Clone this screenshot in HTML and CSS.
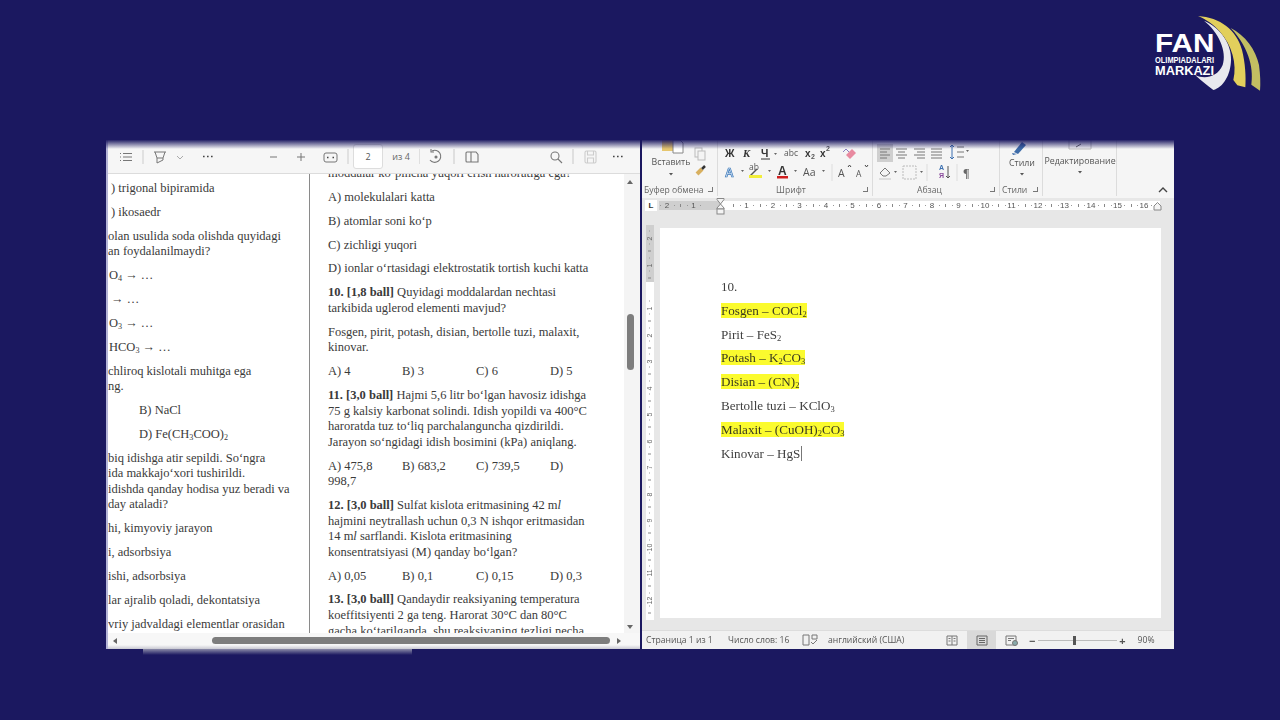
FILE: index.html
```html
<!DOCTYPE html>
<html>
<head>
  <meta charset="UTF-8">
  <title>Fan olimpiadalari markazi</title>
  <link rel="stylesheet" href="styles.css">
</head>
<body>
  <svg class="logo" viewBox="0 0 450 330">
    <path fill="#e9e9ee" d="M222 62 C275 85 305 135 303 180 C302 225 280 262 250 270 C232 258 212 240 196 226 C225 238 262 232 278 195 C292 155 265 95 222 62Z"/>
    <path fill="#e2cf5c" d="M204 48 C270 52 320 90 336 150 C346 190 348 230 346 262 L322 256 L310 240 C322 190 305 135 270 95 C250 72 228 58 204 48Z"/>
    <path fill="#c2be62" d="M302 84 C345 105 378 150 387 195 C391 225 392 250 390 272 L364 254 C370 215 364 150 302 84Z"/>
    <text class="logo-fan" x="75" y="157" textLength="178" lengthAdjust="spacingAndGlyphs">FAN</text>
    <text class="logo-small" x="75" y="190" textLength="177" lengthAdjust="spacingAndGlyphs">OLIMPIADALARI</text>
    <text class="logo-mid" x="75" y="224" textLength="177" lengthAdjust="spacingAndGlyphs">MARKAZI</text>
  </svg>

  <div class="screen">
    <!-- pdf viewer -->
    <div class="pdf">
      <div class="pdf-toolbar">
        <svg class="tb-left" width="247" height="34" fill="none" stroke="#777" stroke-width="1">
          <path d="M14 13.500h1M14 17h1M14 20.500h1M17 13.500h9M17 17h9M17 20.500h9"/>
          <path d="M37 10v14" stroke="#ccc"/>
          <path d="M48 12h12M49 12l2 6h6l2-6M51 18v5l6-3v-2"/>
          <path d="M71 16l3 3 3-3" stroke="#aaa"/>
          <path d="M97 16.500h1.600M101 16.500h1.600M105 16.500h1.600" stroke="#444" stroke-width="1.6"/>
          <path d="M164 17h7M191 17h8M195 13v8"/>
          <rect x="218" y="13" width="13" height="9" rx="2"/>
          <path d="M221 17.500h1.500M226.500 17.500h1.500" stroke="#444" stroke-width="1.5"/>
          <path d="M242 9v15" stroke="#ccc"/>
        </svg>
        <div class="page-box">2</div>
        <div class="page-label">из 4</div>
        <svg class="tb-right" width="221" height="34" fill="none" stroke="#777" stroke-width="1.1">
          <path d="M0 9v15M35 9v15" stroke="#ccc"/>
          <path d="M13 11a6 6 0 1 1-2 9"/>
          <path d="M12 9v3h3" stroke="#777"/>
          <circle cx="17" cy="17" r="1" fill="#666"/>
          <path d="M48 12h4v10h-4a1 1 0 0 1-1-1v-8a1 1 0 0 1 1-1zM52 12h5l2 2.500V22h-7"/>
          <circle cx="136" cy="16" r="4"/><path d="M139 19l4 4"/>
          <path d="M154 9v15" stroke="#ccc"/>
          <rect x="166" y="11" width="11" height="12" rx="1.500" stroke="#ccc"/>
          <path d="M168.500 11v4h6v-4M168.500 23v-5h6v5" stroke="#ccc"/>
          <path d="M194 16.500h1.600M198 16.500h1.600M202 16.500h1.600" stroke="#444" stroke-width="1.6"/>
        </svg>
      </div>

      <div class="pdf-view">
        <div class="pdf-pages">
          <div class="col col-left">
            <p class="in1">) trigonal bipiramida</p>
            <p class="in1">) ikosaedr</p>
            <p>olan usulida soda olishda quyidagi<br>an foydalanilmaydi?</p>
            <p class="in0">O<sub>4</sub> → …</p>
            <p class="in1">→ …</p>
            <p class="in0">O<sub>3</sub> → …</p>
            <p class="in0">HCO<sub>3</sub> → …</p>
            <p>chliroq kislotali muhitga ega<br>ng.</p>
            <p class="in2">B) NaCl</p>
            <p class="in2">D) Fe(CH<sub>3</sub>COO)<sub>2</sub></p>
            <p>biq idishga atir sepildi. So‘ngra<br>ida makkajo‘xori tushirildi.<br>idishda qanday hodisa yuz beradi va<br>day ataladi?</p>
            <p>hi, kimyoviy jarayon</p>
            <p>i, adsorbsiya</p>
            <p>ishi, adsorbsiya</p>
            <p>lar ajralib qoladi, dekontatsiya</p>
            <p>vriy jadvaldagi elementlar orasidan</p>
          </div>
          <div class="col col-right">
            <p>moddalar ko‘pincha yuqori erish haroratiga ega?</p>
            <p>A) molekulalari katta</p>
            <p>B) atomlar soni ko‘p</p>
            <p>C) zichligi yuqori</p>
            <p>D) ionlar o‘rtasidagi elektrostatik tortish kuchi katta</p>
            <p><b>10. [1,8 ball]</b> Quyidagi moddalardan nechtasi<br>tarkibida uglerod elementi mavjud?</p>
            <p>Fosgen, pirit, potash, disian, bertolle tuzi, malaxit,<br>kinovar.</p>
            <p class="answers"><span>A) 4</span><span>B) 3</span><span>C) 6</span><span>D) 5</span></p>
            <p><b>11. [3,0 ball]</b> Hajmi 5,6 litr bo‘lgan havosiz idishga<br>75 g kalsiy karbonat solindi. Idish yopildi va 400°C<br>haroratda tuz to‘liq parchalanguncha qizdirildi.<br>Jarayon so‘ngidagi idish bosimini (kPa) aniqlang.</p>
            <p><span class="answers"><span>A) 475,8</span><span>B) 683,2</span><span>C) 739,5</span><span>D)</span></span>998,7</p>
            <p><b>12. [3,0 ball]</b> Sulfat kislota eritmasining 42 m<i>l</i><br>hajmini neytrallash uchun 0,3 N ishqor eritmasidan<br>14 m<i>l</i> sarflandi. Kislota eritmasining<br>konsentratsiyasi (M) qanday bo‘lgan?</p>
            <p class="answers"><span>A) 0,05</span><span>B) 0,1</span><span>C) 0,15</span><span>D) 0,3</span></p>
            <p><b>13. [3,0 ball]</b> Qandaydir reaksiyaning temperatura<br>koeffitsiyenti 2 ga teng. Harorat 30°C dan 80°C<br>gacha ko‘tarilganda, shu reaksiyaning tezligi necha</p>
          </div>
        </div>
        <div class="vscroll">
          <span class="arrow-up"></span>
          <span class="vthumb"></span>
          <span class="arrow-down"></span>
        </div>
      </div>
      <div class="hscroll">
        <span class="arrow-left"></span>
        <span class="hthumb"></span>
        <span class="arrow-right"></span>
      </div>
    </div>

    <!-- word window -->
    <div class="word">
      <div class="ribbon">
        <div class="rgroup r-clip">
          <svg class="ricons" width="76" height="42" fill="none" stroke="#888">
            <rect x="20" y="-2" width="11" height="13" fill="#e6c66e" stroke="none"/>
            <path d="M31 0h7l3 3v10H31z" fill="#fff"/>
            <text class="rtxt" x="29" y="25" text-anchor="middle">Вставить</text>
            <path d="M27 33h4l-2 2.500z" fill="#555" stroke="none"/>
            <rect x="53" y="8" width="7" height="9" fill="#f4f4f4" stroke="#bbb"/>
            <rect x="56" y="11" width="7" height="9" fill="#f4f4f4" stroke="#bbb"/>
            <path d="M55 34l5-5" stroke="#d8b060" stroke-width="4"/>
            <path d="M60 29l3-3" stroke="#333" stroke-width="2.500"/>
          </svg>
          <div class="rlabel">Буфер обмена <i class="launch"></i></div>
        </div>
        <div class="rgroup r-font">
          <svg class="ricons" width="155" height="42" fill="none">
            <text class="rbold" x="7" y="17">Ж</text>
            <text class="rbold it" x="25" y="17">К</text>
            <text class="rbold" x="43" y="17">Ч</text>
            <path d="M43 19h9" stroke="#333"/>
            <path d="M56 13h3l-1.500 2z" fill="#666"/>
            <text class="rthin" x="66" y="16">abc</text>
            <text class="rbold sm" x="87" y="17">x</text><text class="rtiny" x="93" y="19">2</text>
            <text class="rbold sm" x="102" y="17">x</text><text class="rtiny" x="108" y="11">2</text>
            <path d="M128 15l6-6 4 4-6 6z" fill="#e88aa0"/>
            <path d="M125 12l3-3 3 3" stroke="#8a7ec0"/>
            <text class="ra blue" x="7" y="37">A</text>
            <path d="M23 30h3l-1.500 2z" fill="#666"/>
            <text class="rthin" x="31" y="30">ab</text>
            <path d="M32 36l7-7" stroke="#555" stroke-width="1.500"/>
            <rect x="31" y="35" width="13" height="3" fill="#f2ee3a"/>
            <path d="M50 30h3l-1.500 2z" fill="#666"/>
            <text class="ra" x="60" y="35" fill="#333">A</text>
            <rect x="59" y="36" width="11" height="2.500" fill="#d02020"/>
            <path d="M76 30h3l-1.500 2z" fill="#666"/>
            <text class="rthin big" x="85" y="36">Aa</text>
            <path d="M104 30h3l-1.500 2z" fill="#666"/>
            <path d="M114 24v17" stroke="#ddd"/>
            <text class="rthin big" x="120" y="37">A</text><path d="M130 27l1.500-2 1.500 2" stroke="#444"/>
            <text class="rthin" x="138" y="37">A</text><path d="M147 25l1.500 2 1.500-2" stroke="#444"/>
          </svg>
          <div class="rlabel label-mid">Шрифт <i class="launch"></i></div>
        </div>
        <div class="rgroup r-para">
          <svg class="ricons" width="127" height="42" fill="none" stroke="#777">
            <rect x="4" y="4" width="16" height="18" fill="#cfcfcf" stroke="none"/>
            <path d="M7 9h10M7 12h7M7 15h10M7 18h7"/>
            <path d="M23 9h11M25 12h7M23 15h11M25 18h7M41 9h11M44 12h8M41 15h11M44 18h8M58 9h11M58 12h11M58 15h11M58 18h11"/>
            <path d="M79 5v14M77 7l2-2 2 2M77 17l2 2 2-2" stroke="#3b6fb0"/>
            <path d="M84 7h7M84 12h7M84 17h7"/>
            <path d="M93 10h3l-1.500 2z" fill="#666" stroke="none"/>
            <path d="M7 33l5-5 5 5-4 3H10z" fill="#f4f4f4"/>
            <rect x="6" y="38" width="12" height="2" fill="#ddd" stroke="none"/>
            <path d="M21 31h3l-1.500 2z" fill="#666" stroke="none"/>
            <rect x="30" y="26" width="13" height="13" stroke="#bbb" stroke-dasharray="2 1"/>
            <path d="M47 31h3l-1.500 2z" fill="#666" stroke="none"/>
            <path d="M54 24v17" stroke="#ddd"/>
            <text class="rtiny blue" x="66" y="30">А</text>
            <text class="rtiny purple" x="66" y="38">Я</text>
            <path d="M75 26v12M73 36l2 2 2-2" stroke="#555"/>
            <path d="M84 24v17" stroke="#ddd"/>
            <text class="rpil" x="90" y="37">¶</text>
          </svg>
          <div class="rlabel label-para">Абзац <i class="launch"></i></div>
        </div>
        <div class="rgroup r-styles">
          <svg class="ricons" width="43" height="42" fill="none">
            <path d="M14 12l8-10 4 3-8 9z" fill="#3d6ba8"/>
            <path d="M12 13l5 1-4 1z" fill="#3d6ba8"/>
            <text class="rtxt" x="22" y="26" text-anchor="middle">Стили</text>
            <path d="M20 33h4l-2 2.500z" fill="#555"/>
          </svg>
          <div class="rlabel">Стили <i class="launch"></i></div>
        </div>
        <div class="rgroup r-edit">
          <svg class="ricons" width="74" height="42" fill="none">
            <path d="M26 0v9h22V0" stroke="#bbb"/>
            <path d="M33 7l5-3" stroke="#666"/>
            <text class="rtxt" x="37" y="24" text-anchor="middle">Редактирование</text>
            <path d="M35 31h4l-2 2.500z" fill="#555"/>
          </svg>
        </div>
        <svg class="collapse" width="10" height="6" fill="none" stroke="#444" stroke-width="1.4"><path d="M1 5l4-4 4 4"/></svg>
      </div>

      <div class="ruler-row">
        <div class="ruler-corner">L</div>
        <div class="ruler">
          <div class="ruler-margin">
            <span class="rc">2</span><span class="rc">1</span>
          </div>
          <div class="ruler-main">
            <span class="rc">1</span><span class="rc">2</span><span class="rc">3</span><span class="rc">4</span><span class="rc">5</span><span class="rc">6</span><span class="rc">7</span><span class="rc">8</span><span class="rc">9</span><span class="rc">10</span><span class="rc">11</span><span class="rc">12</span><span class="rc">13</span><span class="rc">14</span><span class="rc">15</span><span class="rc">16</span>
          </div>
          <svg class="indent" width="10" height="17" fill="#f4f4f4" stroke="#888"><path d="M1 .5h7v1L4.500 6 1 1.500zM4.500 6L8 10v1H1v-1z"/><rect x="1" y="11" width="7" height="5"/></svg>
          <svg class="indent-right" width="10" height="14" fill="#f4f4f4" stroke="#888"><path d="M1 12V8l3.500-3.500L8 8v4z"/></svg>
        </div>
      </div>

      <div class="doc-area">
        <div class="vruler">
          <div class="vruler-margin"><span class="vc">2</span><span class="vc">1</span></div>
          <div class="vruler-main">
            <span class="vc">1</span><span class="vc">2</span><span class="vc">3</span><span class="vc">4</span><span class="vc">5</span><span class="vc">6</span><span class="vc">7</span><span class="vc">8</span><span class="vc">9</span><span class="vc">10</span><span class="vc">11</span><span class="vc">12</span>
          </div>
        </div>
        <div class="page">
          <p>10.</p>
          <p><mark>Fosgen – COCl<sub>2</sub></mark></p>
          <p>Pirit – FeS<sub>2</sub></p>
          <p><mark>Potash – K<sub>2</sub>CO<sub>3</sub></mark></p>
          <p><mark>Disian – (CN)<sub>2</sub></mark></p>
          <p>Bertolle tuzi – KClO<sub>3</sub></p>
          <p><mark>Malaxit – (CuOH)<sub>2</sub>CO<sub>3</sub></mark></p>
          <p><span class="caret">Kinovar – HgS</span></p>
        </div>
      </div>

      <div class="statusbar">
        <span class="st-page">Страница 1 из 1</span>
        <span class="st-words">Число слов: 16</span>
        <svg class="st-proof" width="16" height="12" fill="none" stroke="#777"><path d="M1 1h6v10H1zM10 1h5v4h-5zM9 8l2 2 4-4"/></svg>
        <span class="st-lang">английский (США)</span>
        <svg class="st-read" width="12" height="11" fill="none" stroke="#777"><path d="M1 1h10v9H1zM6 1v9M2.500 3.500h2M2.500 6h2M7.500 3.500h2M7.500 6h2"/></svg>
        <span class="st-print"><svg width="12" height="11" fill="none" stroke="#666"><path d="M1 1h10v9H1zM3 3.500h6M3 5.500h6M3 7.500h6"/></svg></span>
        <svg class="st-web" width="13" height="11" fill="none" stroke="#777"><path d="M1 1h10v9H1zM3 3.500h6M3 5.500h3"/><circle cx="10" cy="8" r="2.500" fill="#8aa"/></svg>
        <span class="st-minus">−</span>
        <span class="zoom-track"><span class="zoom-thumb"></span></span>
        <span class="st-plus">+</span>
        <span class="st-zoom">90%</span>
      </div>
    </div>
  </div>
  <div class="under-strip"></div>
</body>
</html>
```

FILE: styles.css
```css
html, body {
  margin: 0;
  height: 100%;
  overflow: hidden;
  background-color: rgb(27, 24, 96);
}

body {
  padding: 140px 0 0 106px;
  box-sizing: border-box;
}

p {
  margin: 0;
}

sub {
  font-size: 0.65em;
  line-height: 0;
  vertical-align: -0.2em;
}

.logo {
  position: absolute;
  left: 1130px;
  top: 0;
  width: 150px;
  height: 110px;
}

.logo-fan, .logo-small, .logo-mid {
  font-family: "Liberation Sans", sans-serif;
  font-weight: bold;
  fill: #fff;
}

.logo-fan { font-size: 80px; }
.logo-small { font-size: 27px; }
.logo-mid { font-size: 41px; }

.screen {
  position: relative;
  display: flex;
  gap: 2px;
  width: 1068px;
  height: 509px;
  filter: blur(0.5px);
}

.screen::before {
  content: "";
  position: absolute;
  z-index: 5;
  left: 0;
  right: 0;
  top: 0;
  height: 9px;
  background: linear-gradient(rgba(27, 24, 96, 0.95), rgba(27, 24, 96, 0));
}

/* pdf side */
.pdf {
  width: 534px;
  display: flex;
  flex-direction: column;
  background-color: #fff;
  border-left: 2px solid #b4b4d6;
  box-sizing: border-box;
  overflow: hidden;
}

.pdf-toolbar {
  flex: none;
  display: flex;
  align-items: center;
  height: 33px;
  margin-left: -2px;
  background-color: #f6f6f6;
  border-bottom: 1px solid #dcdcdc;
}

.tb-left, .tb-right {
  flex: none;
}

.page-box {
  flex: none;
  width: 30px;
  height: 25px;
  background-color: #fff;
  border: 1px solid #ddd;
  border-radius: 3px;
  box-sizing: border-box;
  text-align: center;
  font: 9px/23px "Open Sans", sans-serif;
  color: #555;
}

.page-label {
  flex: none;
  width: 36px;
  text-align: center;
  font: 9px "Open Sans", sans-serif;
  color: #666;
}

.pdf-view {
  flex: 1;
  min-height: 0;
  display: flex;
}

.pdf-pages {
  flex: 1;
  display: flex;
  overflow: hidden;
}

.col {
  font-family: "Liberation Serif", serif;
  font-size: 12.5px;
  line-height: 15.6px;
  color: #3a3a3a;
  white-space: nowrap;
  overflow: hidden;
}

.col p {
  margin-bottom: 8.25px;
}

.col-left {
  flex: none;
  width: 201px;
  padding-top: 7px;
  border-right: 1px solid #8a8a8a;
}

.col-right {
  flex: 1;
  padding-left: 18px;
  margin-top: -8px;
}

.in0 { padding-left: 1px; }
.in1 { padding-left: 3px; }
.in2 { padding-left: 31px; }

.answers {
  display: flex;
}

.answers span {
  width: 74px;
}

.vscroll {
  flex: none;
  position: relative;
  width: 16px;
  background-color: #f4f4f4;
}

.arrow-up, .arrow-down, .arrow-left, .arrow-right {
  position: absolute;
  width: 0;
  height: 0;
  border-style: solid;
  border-color: transparent;
}

.arrow-up {
  left: 3px;
  top: 6px;
  border-width: 0 3.5px 4px;
  border-bottom-color: #666;
}

.arrow-down {
  left: 3px;
  bottom: 4px;
  border-width: 4px 3.5px 0;
  border-top-color: #666;
}

.vthumb {
  position: absolute;
  left: 3px;
  top: 140px;
  width: 7px;
  height: 56px;
  border-radius: 4px;
  background-color: #7d7d7d;
}

.hscroll {
  flex: none;
  position: relative;
  height: 16px;
  background: linear-gradient(#f7f7f7 75%, #c9c9d2);
}

.hthumb {
  position: absolute;
  left: 104px;
  top: 4px;
  width: 398px;
  height: 7px;
  border-radius: 4px;
  background-color: #7d7d7d;
}

.arrow-left {
  left: 5px;
  top: 5px;
  border-width: 3.5px 4px 3.5px 0;
  border-right-color: #666;
}

.arrow-right {
  right: 19px;
  top: 5px;
  border-width: 3.5px 0 3.5px 4px;
  border-left-color: #666;
}

/* word side */
.word {
  width: 532px;
  display: flex;
  flex-direction: column;
  background-color: #e7e7e7;
  overflow: hidden;
}

.ribbon {
  flex: none;
  display: flex;
  height: 58px;
  background-color: #f5f5f5;
  font-family: "Open Sans", sans-serif;
}

.rgroup {
  position: relative;
  flex: none;
  display: flex;
  flex-direction: column;
  justify-content: space-between;
  box-sizing: border-box;
  border-right: 1px solid #dcdcdc;
  height: 56px;
}

.r-clip { width: 76px; }
.r-font { width: 155px; }
.r-para { width: 127px; }
.r-styles { width: 43px; }
.r-edit { width: 74px; }

.ricons {
  display: block;
  flex: none;
}

.rlabel {
  position: relative;
  padding-left: 2px;
  height: 12px;
  font-size: 8.6px;
  line-height: 12px;
  color: #666;
  white-space: nowrap;
}

.label-mid { text-align: center; padding-right: 10px; }
.label-para { padding-left: 44px; }

.launch {
  position: absolute;
  right: 4px;
  top: 3px;
  width: 4px;
  height: 4px;
  border-right: 1px solid #777;
  border-bottom: 1px solid #777;
}

.rtxt {
  font-family: "Open Sans", sans-serif;
  font-size: 8.8px;
  fill: #555;
  stroke: none;
}

.rbold {
  font-family: "Liberation Sans", sans-serif;
  font-size: 10.5px;
  font-weight: bold;
  fill: #333;
}

.rbold.it { font-style: italic; font-family: "Liberation Serif", serif; }
.rbold.sm { font-size: 10px; }

.rthin {
  font-family: "Open Sans", sans-serif;
  font-size: 8.5px;
  fill: #555;
}

.rthin.big { font-size: 10.5px; }

.rtiny {
  font-family: "Liberation Sans", sans-serif;
  font-size: 7px;
  font-weight: bold;
  fill: #555;
  stroke: none;
}

.rtiny.blue { fill: #3b6fb0; }
.rtiny.purple { fill: #8a4a9c; }

.ra {
  font-family: "Liberation Sans", sans-serif;
  font-size: 12px;
  font-weight: bold;
}

.ra.blue {
  fill: #cfe0f4;
  stroke: #3b78b8;
  stroke-width: 0.7;
}

.rpil {
  font-family: "Liberation Serif", serif;
  font-size: 12px;
  font-weight: bold;
  fill: #666;
  stroke: none;
}

.collapse {
  margin: 47px 0 0 41px;
  flex: none;
}

.ruler-row {
  flex: none;
  display: flex;
  align-items: center;
  height: 14px;
  padding-left: 3px;
}

.ruler-corner {
  flex: none;
  width: 12px;
  height: 11px;
  margin-right: 2px;
  background-color: #fff;
  font: bold 8px/11px "Liberation Sans", sans-serif;
  text-align: center;
  color: #333;
}

.ruler {
  position: relative;
  display: flex;
  width: 501px;
  height: 9px;
  font: 8px/9px "Liberation Sans", sans-serif;
  color: #555;
}

.ruler-margin {
  flex: none;
  width: 61px;
  display: flex;
  justify-content: flex-end;
  padding-right: 13.25px;
  box-sizing: border-box;
  background-color: #cfcfcf;
  overflow: hidden;
}

.ruler-main {
  flex: 1;
  display: flex;
  padding-left: 13.25px;
  background-color: #fff;
  overflow: hidden;
}

.rc {
  flex: none;
  width: 26.5px;
  text-align: center;
  background:
    linear-gradient(#888, #888) 0 50% / 1px 3px no-repeat,
    linear-gradient(#999, #999) 6.6px 50% / 1px 1px no-repeat,
    linear-gradient(#999, #999) 19.9px 50% / 1px 1px no-repeat;
}

.indent {
  position: absolute;
  left: 57px;
  top: -3px;
}

.indent-right {
  position: absolute;
  right: -3px;
  top: -3px;
}

.doc-area {
  flex: 1;
  min-height: 0;
  display: flex;
  align-items: flex-start;
  padding: 16px 0 0 4px;
  background-color: #e7e7e7;
}

.vruler {
  flex: none;
  width: 8px;
  height: 395px;
  margin: -3px 6px 0 0;
  font: 7px/8px "Liberation Sans", sans-serif;
  color: #666;
  overflow: hidden;
}

.vruler-margin {
  height: 57px;
  background-color: #cfcfcf;
  overflow: hidden;
}

.vruler-main {
  height: 338px;
  padding-top: 13.25px;
  box-sizing: border-box;
  background-color: #fff;
  overflow: hidden;
}

.vc {
  display: flex;
  align-items: center;
  justify-content: center;
  height: 26.5px;
  writing-mode: vertical-rl;
  transform: rotate(180deg);
  background:
    linear-gradient(#888, #888) 50% 0 / 3px 1px no-repeat,
    linear-gradient(#999, #999) 50% 6.6px / 1px 1px no-repeat,
    linear-gradient(#999, #999) 50% 19.9px / 1px 1px no-repeat;
}

.page {
  flex: none;
  width: 501px;
  height: 390px;
  padding: 47px 0 0 61px;
  box-sizing: border-box;
  background-color: #fff;
  font-family: "Liberation Serif", serif;
  font-size: 13.1px;
  line-height: 23.8px;
  color: #3f3f3f;
}

mark {
  background-color: #fbfb2e;
  color: #3a3a20;
}

.caret {
  border-right: 1px solid #777;
  padding-right: 0.5px;
}

.statusbar {
  flex: none;
  display: flex;
  align-items: center;
  height: 18px;
  background-color: #f1f1f1;
  border-top: 1px solid #dcdcdc;
  font: 8.6px "Open Sans", sans-serif;
  color: #555;
  white-space: nowrap;
}

.st-page { margin-left: 4px; width: 82px; flex: none; }
.st-words { width: 74px; flex: none; }
.st-proof { width: 26px; flex: none; }
.st-lang { width: 118px; flex: none; }
.st-read { width: 21px; flex: none; }

.st-print {
  flex: none;
  width: 29px;
  height: 18px;
  display: flex;
  align-items: center;
  justify-content: center;
  background-color: #d9d9d9;
}

.st-web { flex: none; margin-left: 9px; width: 19px; }
.st-minus { flex: none; margin-left: 5px; font-size: 11px; font-weight: bold; }

.zoom-track {
  position: relative;
  flex: none;
  width: 79px;
  height: 1px;
  margin: 0 2px 0 3px;
  background-color: #bbb;
}

.zoom-thumb {
  position: absolute;
  left: 35px;
  top: -4px;
  width: 3px;
  height: 9px;
  background-color: #555;
}

.st-plus { flex: none; font-size: 11px; font-weight: bold; }
.st-zoom { flex: none; margin-left: 12px; }

.under-strip {
  width: 269px;
  height: 6px;
  margin-left: 37px;
  background: linear-gradient(#8b8ba8, rgba(27, 24, 96, 0));
}
```
